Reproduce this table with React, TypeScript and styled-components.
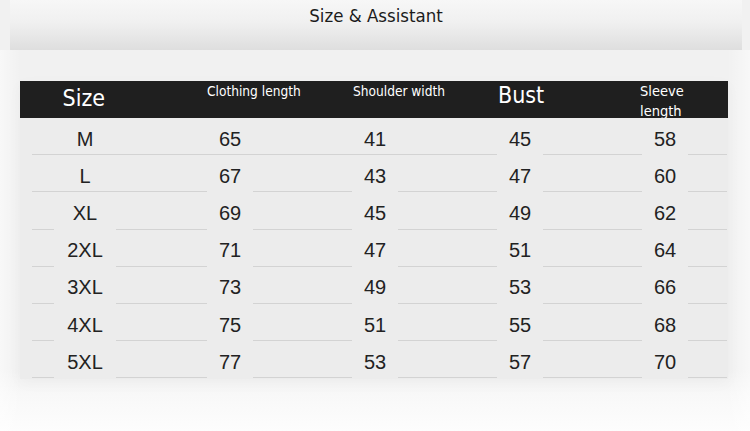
import React from "react";
import styled, { createGlobalStyle } from "styled-components";

const Global = createGlobalStyle`
  html, body { margin: 0; padding: 0; }
  body {
    width: 750px;
    height: 431px;
    overflow: hidden;
    background: #fbfbfb;
  }
`;

const Page = styled.div`
  width: 750px;
  height: 431px;
  display: flex;
  flex-direction: column;
  background: linear-gradient(180deg, #f1f1f1 0px, #f1f1f1 370px, #f8f8f8 395px, #fdfdfd 431px);
`;

const Banner = styled.header`
  height: 50px;
  margin: 0 8px 0 10px;
  display: flex;
  justify-content: center;
  padding-top: 5px;
  box-sizing: border-box;
  background: linear-gradient(180deg, #f7f7f7 0%, #f0f0f0 45%, #e3e3e3 85%, #dedede 100%);
  font-family: "DejaVu Sans Condensed", "DejaVu Sans", sans-serif;
  font-size: 18.5px;
  color: #1c1c1c;
`;

const Stage = styled.div`
  flex: 1;
  padding: 31px 22px 0 20px;
  background: linear-gradient(90deg, rgba(255,255,255,0.5) 0px, rgba(255,255,255,0) 20px, rgba(255,255,255,0) 727px, rgba(255,255,255,0.5) 750px);
`;

const Panel = styled.section`
  background: #ececec;
  box-shadow: 0 4px 14px rgba(0, 0, 0, 0.03);
  padding-bottom: 1px;
`;

const HeaderBar = styled.div`
  height: 37px;
  background: #1f1f1f;
  overflow: hidden;
`;

const Grid = styled.div`
  display: grid;
  grid-template-columns: repeat(5, 145px);
  margin: 0 -10px 0 -7.5px;
`;

const HeadCell = styled.div<{ $big?: boolean; $pad: number; $top: number }>`
  padding-left: ${(p) => p.$pad}px;
  padding-top: ${(p) => p.$top}px;
  font-family: "DejaVu Sans Condensed", "DejaVu Sans", sans-serif;
  color: #ffffff;
  font-size: ${(p) => (p.$big ? "23px" : "13.6px")};
  line-height: ${(p) => (p.$big ? "26px" : "20px")};
  white-space: nowrap;
`;

const SleeveCell = styled(HeadCell)`
  font-size: 14.5px;
  line-height: 20px;
  white-space: normal;
`;

const Row = styled(Grid)`
  height: 37.2px;
`;

const Cell = styled.div<{ $gap: number; $ls: number; $re: number }>`
  position: relative;
  display: flex;
  align-items: center;
  justify-content: center;
  padding-top: 5px;
  box-sizing: border-box;
  font-family: "Liberation Sans", Arial, sans-serif;
  font-size: 20px;
  color: #222222;

  &::before,
  &::after {
    content: "";
    position: absolute;
    bottom: 0;
    height: 1px;
    background: #d3d3d3;
  }
  &::before {
    left: ${(p) => p.$ls}px;
    right: calc(50% + ${(p) => p.$gap / 2}px);
  }
  &::after {
    left: calc(50% + ${(p) => p.$gap / 2}px);
    right: ${(p) => p.$re}px;
  }
`;

const headers = [
  { label: "Size", big: true, pad: 50, top: 4 },
  { label: "Clothing length", big: false, pad: 49.5, top: 0 },
  { label: "Shoulder width", big: false, pad: 50.5, top: 0 },
  { label: "Bust", big: true, pad: 50.5, top: 1 },
];

const rows: (string | number)[][] = [
  ["M", 65, 41, 45, 58],
  ["L", 67, 43, 47, 60],
  ["XL", 69, 45, 49, 62],
  ["2XL", 71, 47, 51, 64],
  ["3XL", 73, 49, 53, 66],
  ["4XL", 75, 51, 55, 68],
  ["5XL", 77, 53, 57, 70],
];

const sizeGap = (s: string) => (s.length === 1 ? 0 : 62);

export default function App() {
  return (
    <>
      <Global />
      <Page>
        <Banner>Size &amp; Assistant</Banner>
        <Stage>
          <Panel>
            <HeaderBar>
              <Grid>
                {headers.map((h) => (
                  <HeadCell key={h.label} $big={h.big} $pad={h.pad} $top={h.top}>
                    {h.label}
                  </HeadCell>
                ))}
                <SleeveCell $pad={47.5} $top={0}>
                  Sleeve
                  <br />
                  length
                </SleeveCell>
              </Grid>
            </HeaderBar>
            {rows.map((r, ri) => (
              <Row key={ri}>
                {r.map((v, ci) => (
                  <Cell
                    key={ci}
                    $gap={ci === 0 ? sizeGap(String(v)) : ri === 0 && ci < 3 ? 0 : 46}
                    $ls={ci === 0 ? 19.5 : 0}
                    $re={ci === 4 ? 10.5 : 0}
                  >
                    {v}
                  </Cell>
                ))}
              </Row>
            ))}
          </Panel>
        </Stage>
      </Page>
    </>
  );
}
